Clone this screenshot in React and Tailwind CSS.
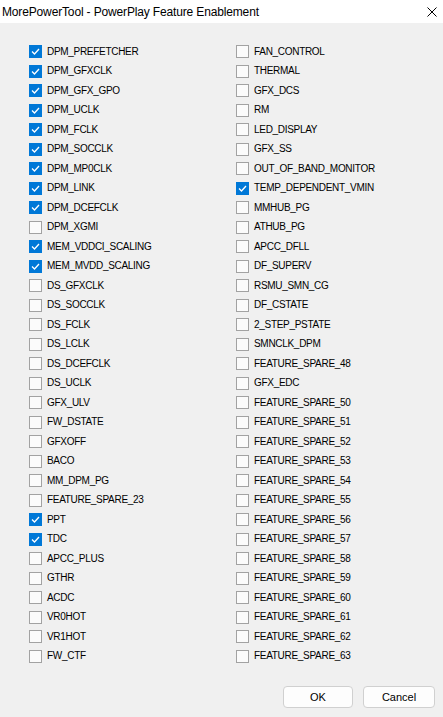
import React from 'react';

const left = [
  ['DPM_PREFETCHER', true],
  ['DPM_GFXCLK', true],
  ['DPM_GFX_GPO', true],
  ['DPM_UCLK', true],
  ['DPM_FCLK', true],
  ['DPM_SOCCLK', true],
  ['DPM_MP0CLK', true],
  ['DPM_LINK', true],
  ['DPM_DCEFCLK', true],
  ['DPM_XGMI', false],
  ['MEM_VDDCI_SCALING', true],
  ['MEM_MVDD_SCALING', true],
  ['DS_GFXCLK', false],
  ['DS_SOCCLK', false],
  ['DS_FCLK', false],
  ['DS_LCLK', false],
  ['DS_DCEFCLK', false],
  ['DS_UCLK', false],
  ['GFX_ULV', false],
  ['FW_DSTATE', false],
  ['GFXOFF', false],
  ['BACO', false],
  ['MM_DPM_PG', false],
  ['FEATURE_SPARE_23', false],
  ['PPT', true],
  ['TDC', true],
  ['APCC_PLUS', false],
  ['GTHR', false],
  ['ACDC', false],
  ['VR0HOT', false],
  ['VR1HOT', false],
  ['FW_CTF', false],
];

const right = [
  ['FAN_CONTROL', false],
  ['THERMAL', false],
  ['GFX_DCS', false],
  ['RM', false],
  ['LED_DISPLAY', false],
  ['GFX_SS', false],
  ['OUT_OF_BAND_MONITOR', false],
  ['TEMP_DEPENDENT_VMIN', true],
  ['MMHUB_PG', false],
  ['ATHUB_PG', false],
  ['APCC_DFLL', false],
  ['DF_SUPERV', false],
  ['RSMU_SMN_CG', false],
  ['DF_CSTATE', false],
  ['2_STEP_PSTATE', false],
  ['SMNCLK_DPM', false],
  ['FEATURE_SPARE_48', false],
  ['GFX_EDC', false],
  ...Array.from({ length: 14 }, (_, i) => [`FEATURE_SPARE_${50 + i}`, false]),
];

const CheckBox = ({ checked }) =>
  checked ? (
    <span className="w-[13px] h-[13px] bg-[#0078d7] flex items-center justify-center">
      <svg width="11" height="11" viewBox="0 0 11 11">
        <path d="M2 5.5 L4.5 8 L9 3" fill="none" stroke="#fff" strokeWidth="1.3" />
      </svg>
    </span>
  ) : (
    <span className="w-[13px] h-[13px] border border-[#a2a2a2] bg-[#fbfbfb]" />
  );

const Row = ({ label, checked }) => (
  <div className="h-[19.5px] flex items-center">
    <CheckBox checked={checked} />
    <span className="ml-[5px] text-[10px] text-black leading-none tracking-[-0.3px]">{label}</span>
  </div>
);

export default function App() {
  return (
    <div
      className="w-[443px] h-[717px] bg-[#f0f0f0] flex flex-col"
      style={{ fontFamily: '"Liberation Sans", Arial, sans-serif' }}
    >
      <div className="h-[23px] bg-white flex items-center justify-between pl-[2px] pr-[6px]">
        <span className="text-[12px] text-black tracking-[-0.15px]">MorePowerTool - PowerPlay Feature Enablement</span>
        <svg width="10" height="10" viewBox="0 0 10 10">
          <path d="M0.5 0.5 L9.5 9.5 M9.5 0.5 L0.5 9.5" stroke="#000" strokeWidth="1" />
        </svg>
      </div>
      <div className="flex pt-[19px] pl-[29px]">
        <div className="w-[207px] flex flex-col">
          {left.map(([l, c]) => (
            <Row key={l} label={l} checked={c} />
          ))}
        </div>
        <div className="flex flex-col">
          {right.map(([l, c]) => (
            <Row key={l} label={l} checked={c} />
          ))}
        </div>
      </div>
      <div className="flex justify-end gap-[10px] pr-[8px] mt-[20px]">
        <button className="w-[70px] h-[22px] bg-[#fdfdfd] border border-[#d0d0d0] rounded-[4px] text-[11px] text-black">
          OK
        </button>
        <button className="w-[72px] h-[22px] bg-[#fdfdfd] border border-[#d0d0d0] rounded-[4px] text-[11px] text-black">
          Cancel
        </button>
      </div>
    </div>
  );
}
